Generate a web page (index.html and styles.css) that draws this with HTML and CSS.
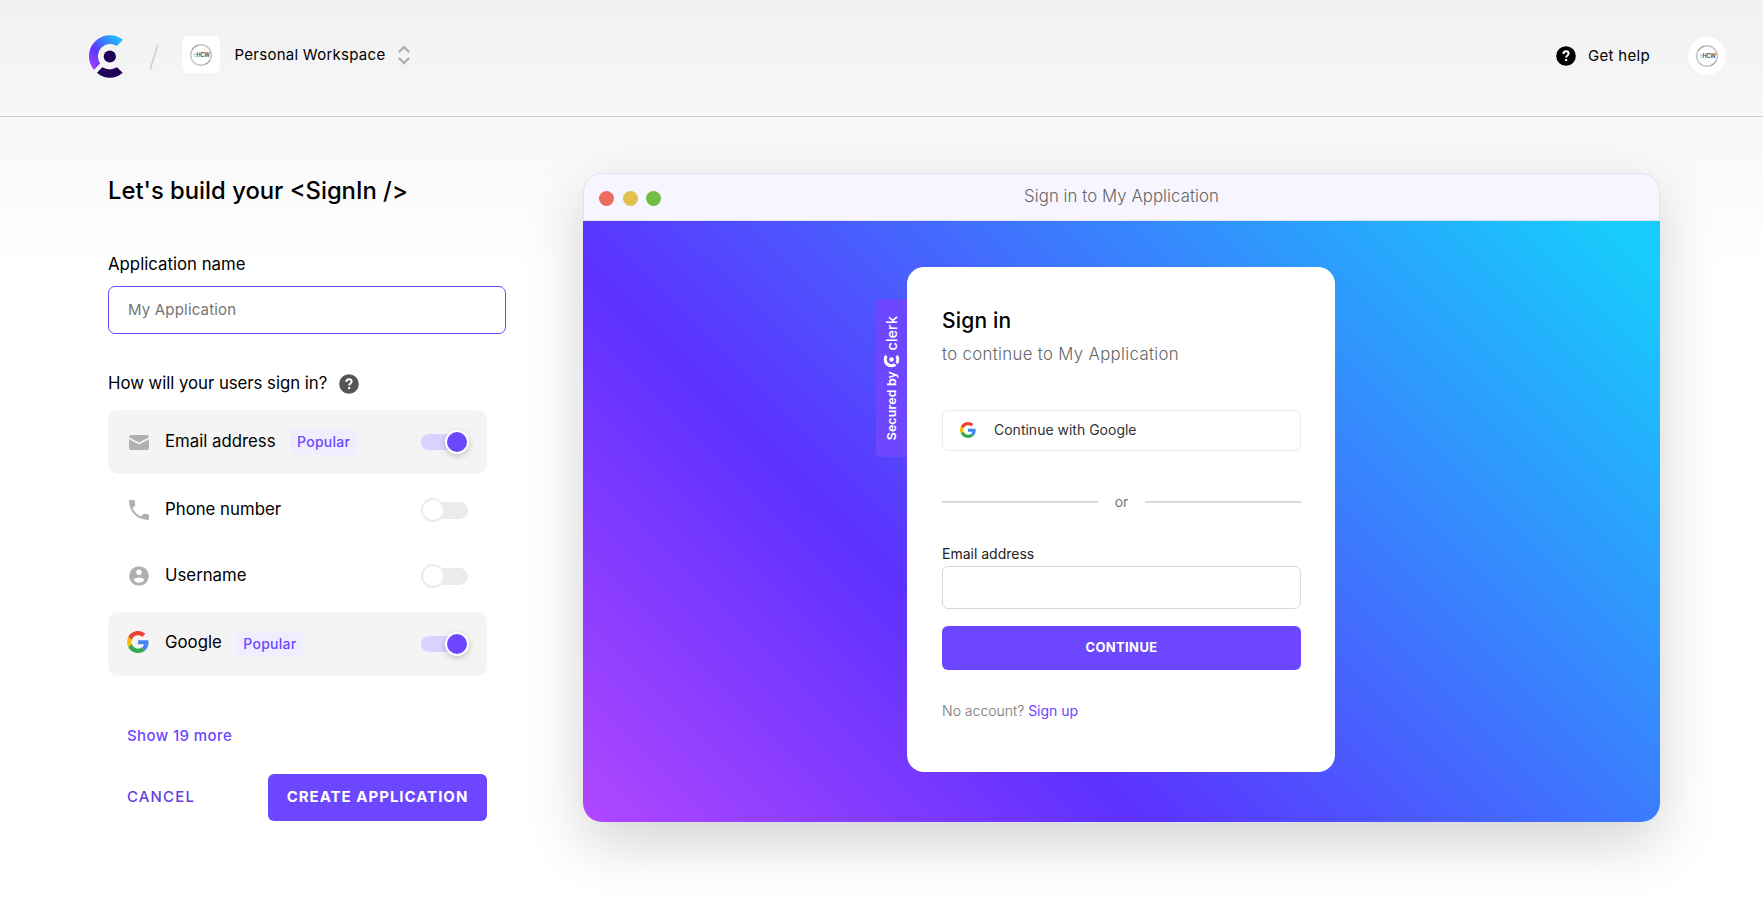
FILE: index.html
```html
<!DOCTYPE html>
<html lang="en">
<head>
<meta charset="utf-8">
<title>Create application</title>
<link rel="stylesheet" href="styles.css">
</head>
<body>
<svg class="defs" aria-hidden="true">
  <defs>
    <symbol id="google" viewBox="0 0 48 48">
      <path fill="#EA4335" d="M24 9.5c3.54 0 6.71 1.22 9.21 3.6l6.85-6.85C35.9 2.38 30.47 0 24 0 14.62 0 6.51 5.38 2.56 13.22l7.98 6.19C12.43 13.72 17.74 9.5 24 9.5z"/>
      <path fill="#4285F4" d="M46.98 24.55c0-1.57-.15-3.09-.38-4.55H24v9.02h12.94c-.58 2.96-2.26 5.48-4.78 7.18l7.73 6c4.51-4.18 7.09-10.36 7.09-17.65z"/>
      <path fill="#FBBC05" d="M10.53 28.59A14.5 14.5 0 0 1 9.77 24c0-1.6.27-3.14.76-4.59l-7.98-6.19A23.9 23.9 0 0 0 0 24c0 3.88.92 7.54 2.56 10.78l7.97-6.19z"/>
      <path fill="#34A853" d="M24 48c6.48 0 11.93-2.13 15.89-5.81l-7.73-6c-2.15 1.45-4.92 2.3-8.16 2.3-6.26 0-11.57-4.22-13.47-9.91l-7.98 6.19C6.51 42.62 14.62 48 24 48z"/>
    </symbol>
    <symbol id="help" viewBox="0 0 20 20">
      <circle cx="10" cy="10" r="9.8" fill="currentColor"/>
      <path d="M7.4 7.9C7.4 6.2 8.5 5.3 10 5.3s2.6.9 2.6 2.3c0 1.9-2.5 1.9-2.5 4" fill="none" stroke="#fff" stroke-width="2"/>
      <rect x="9.1" y="13" width="2.1" height="2.1" fill="#fff"/>
    </symbol>
    <symbol id="seal" viewBox="0 0 24 24">
      <circle cx="12" cy="12" r="10.3" fill="none" stroke="#c4c4c4" stroke-width="1.4"/>
      <path d="M3 7a10.3 10.3 0 0 1 6-4.8M21 17a10.3 10.3 0 0 1-5 4.4" fill="none" stroke="#999" stroke-width="1"/>
      <text x="4.6" y="14" class="seal-mark" fill="#9fd4f2">e</text>
      <text x="7.6" y="14" class="seal-mark" fill="#444">HCW</text>
    </symbol>
  </defs>
</svg>

<header class="topbar">
  <svg class="logo" viewBox="0 0 34 43">
    <defs>
      <linearGradient id="arc" x1="30" y1="4" x2="3" y2="33" gradientUnits="userSpaceOnUse">
        <stop offset="0" stop-color="#1fbfff"/><stop offset=".6" stop-color="#5b3aff"/><stop offset="1" stop-color="#a040ff"/>
      </linearGradient>
    </defs>
    <path d="M33.9 4.7A21 21 0 0 0 5 34.9L11.150 28.4A12.3 12.3 0 0 1 27.800 10.900Z" fill="url(#arc)"/>
    <circle cx="20.800" cy="21.500" r="6.100" fill="#1f0256"/>
    <path d="M8 37.700L13.300 32.300A14.500 14.500 0 0 0 28 32.300L33.700 37.700A19 19 0 0 1 8 37.700Z" fill="#1f0256"/>
  </svg>
  <svg class="slash" viewBox="0 0 10 26"><path d="M8.8.5L1.2 25.5" stroke="#cfcfcf" stroke-width="1.6"/></svg>
  <div class="workspace-tile"><svg class="seal"><use href="#seal"/></svg></div>
  <span class="workspace-name">Personal Workspace</span>
  <svg class="chevrons" viewBox="0 0 12 20"><path d="M1.500 6.500L6 2l4.500 4.500M1.500 13.500L6 18l4.500-4.500" fill="none" stroke="#b0b0b0" stroke-width="2.300" stroke-linecap="round"/></svg>
  <div class="top-right">
    <svg class="help-icon"><use href="#help"/></svg>
    <span class="get-help">Get help</span>
    <div class="avatar"><svg class="seal"><use href="#seal"/></svg></div>
  </div>
</header>

<main class="page">
  <section class="builder">
    <h1 class="title">Let's build your &lt;SignIn /&gt;</h1>
    <label class="field-label" for="app">Application name</label>
    <input class="app-input" id="app" placeholder="My Application">
    <div class="question"><span>How will your users sign in?</span><svg class="help-icon muted"><use href="#help"/></svg></div>
    <ul class="options">
      <li class="option selected">
        <span class="icon"><svg class="mail" viewBox="0 0 20 15"><path d="M2.500 0h15Q20 0 20 2.200L10 7.500 0 2.200Q0 0 2.500 0zM0 4.300L10 9.600 20 4.300V12.500Q20 15 17.500 15h-15Q0 15 0 12.500z" fill="#b0b0b0"/></svg></span>
        <span class="name">Email address</span><span class="badge">Popular</span>
        <span class="toggle on"><span class="knob"></span></span>
      </li>
      <li class="option">
        <span class="icon"><svg class="glyph" viewBox="0 0 20 20"><path d="M1 0H4.800Q5.700 0 5.800 1L6.200 4.800Q6.300 5.500 5.800 6L3.500 8.200Q6.300 13.600 11.800 16.500L14 14.200Q14.500 13.700 15.200 13.800L19 14.200Q20 14.300 20 15.200V19Q20 20 19 20A19 19 0 0 1 0 1Q0 0 1 0z" fill="#b0b0b0"/></svg></span>
        <span class="name">Phone number</span>
        <span class="toggle"><span class="knob"></span></span>
      </li>
      <li class="option">
        <span class="icon"><svg class="glyph" viewBox="0 0 20 20"><circle cx="10" cy="10" r="9.800" fill="#b0b0b0"/><circle cx="10" cy="6.200" r="2.700" fill="#fff"/><path d="M4.600 13.800c1.600-3.200 9.200-3.200 10.800 0-2 4-8.800 4-10.800 0z" fill="#fff"/></svg></span>
        <span class="name">Username</span>
        <span class="toggle"><span class="knob"></span></span>
      </li>
      <li class="option selected google">
        <span class="icon"><svg class="glyph"><use href="#google"/></svg></span>
        <span class="name">Google</span><span class="badge">Popular</span>
        <span class="toggle on"><span class="knob"></span></span>
      </li>
    </ul>
    <a class="show-more">Show 19 more</a>
    <div class="actions"><button class="cancel">CANCEL</button><button class="create">CREATE APPLICATION</button></div>
  </section>

  <section class="window">
    <div class="window-bar">
      <div class="dots"><i class="dot red"></i><i class="dot yellow"></i><i class="dot green"></i></div>
      <span class="window-title">Sign in to My Application</span>
    </div>
    <div class="stage">
      <div class="card">
        <div class="secured">
          <span class="secured-text">Secured by</span>
          <svg class="secured-logo" viewBox="0 0 34 43"><g fill="#fff"><path d="M33.900 4.700A21 21 0 0 0 5 34.900L11.150 28.400A12.300 12.300 0 0 1 27.800 10.900Z"/><circle cx="20.800" cy="21.500" r="6.100"/><path d="M8 37.700L13.300 32.300A14.500 14.500 0 0 0 28 32.300L33.700 37.700A19 19 0 0 1 8 37.700Z"/></g></svg>
          <span class="secured-brand">clerk</span>
        </div>
        <h2 class="card-title">Sign in</h2>
        <p class="card-sub">to continue to My Application</p>
        <button class="google-btn"><svg class="google-icon"><use href="#google"/></svg><span>Continue with Google</span></button>
        <div class="divider"><span>or</span></div>
        <label class="card-label" for="email">Email address</label>
        <input class="card-input" id="email">
        <button class="continue">CONTINUE</button>
        <p class="signup">No account? <a>Sign up</a></p>
      </div>
    </div>
  </section>
</main>
</body>
</html>
```
FILE: styles.css
```css
* { box-sizing: border-box; margin: 0; padding: 0; }
body {
  min-height: 900px;
  overflow: hidden;
  font-family: Inter, "Liberation Sans", sans-serif;
  color: #000;
  background: linear-gradient(180deg, #f1f1f1 0, #fff 270px) #fff;
}
button, input { font: inherit; border: 0; background: none; }
.defs { position: absolute; width: 0; height: 0; }

/* Top bar */
.topbar {
  display: flex;
  align-items: flex-start;
  height: 117px;
  padding: 35px 37px 0 89px;
  border-bottom: 1px solid #d0d0d0;
}
.logo { width: 34px; height: 43px; }
.slash { width: 10px; height: 26px; margin: 9px 0 0 26px; }
.workspace-tile {
  display: grid;
  place-items: center;
  width: 38px;
  height: 37px;
  margin: 1px 0 0 23px;
  border-radius: 6px;
  background: #fff;
}
.seal { width: 24px; height: 24px; }
.seal-mark { font: 600 5.5px Inter, sans-serif; letter-spacing: -.3px; }
.workspace-name { margin: 8px 0 0 14.5px; font-size: 15px; line-height: 24px; letter-spacing: .27px; width: 150px; white-space: nowrap; }
.chevrons { width: 12px; height: 20px; margin: 10px 0 0 13.5px; }
.top-right { display: flex; align-items: center; height: 38px; margin: 2px 0 0 auto; }
.help-icon { width: 20px; height: 20px; }
.get-help { width: 62px; margin: 0 38px 0 12px; font-size: 15px; line-height: 24px; letter-spacing: .3px; white-space: nowrap; }
.avatar { display: grid; place-items: center; width: 38px; height: 38px; border-radius: 50%; background: #fff; }

/* Builder form */
.page { display: flex; align-items: flex-start; gap: 77px; padding: 56px 0 0 108px; }
.builder { width: 398px; padding-top: 2px; }
.title { font-size: 23.8px; line-height: 32px; font-weight: 500; }
.field-label { display: block; margin-top: 45px; font-size: 16.8px; line-height: 24px; }
.app-input {
  display: block;
  width: 398px;
  height: 48px;
  margin-top: 10px;
  padding: 0 19px 1px;
  border: 1px solid #6c47ff;
  border-radius: 7px;
  background: #fff;
  font-size: 15px;
  letter-spacing: .18px;
}
.app-input::placeholder { color: #757575; }
.question { display: flex; align-items: center; gap: 12px; height: 24px; margin-top: 37px; font-size: 16.8px; line-height: 24px; letter-spacing: -.04px; }
.question .help-icon { margin-top: 2px; }
.muted { color: #555; }
.options { width: 379px; height: 266px; margin-top: 15px; list-style: none; }
.option { display: flex; align-items: center; height: 64px; padding: 0 19px 0 21px; border-radius: 10px; }
.option:nth-child(even) { margin-top: 4px; }
.option:nth-child(3) { margin-top: 2px; }
.selected { background: #f4f4f4; }
.icon { display: grid; place-items: center; width: 20px; margin-right: 16px; }
.mail { width: 20px; height: 15px; }
.glyph { width: 20px; height: 20px; }
.google .glyph { width: 22px; height: 22px; margin: 0 0 4px -2px; justify-self: start; }
.name { padding-bottom: 2px; font-size: 16.8px; line-height: 24px; }
.google .name { padding-bottom: 4px; }
.badge { height: 26px; margin-left: 14.5px; padding: 0 7px; border-radius: 5px; background: #f0edff; color: #6c47ff; font-size: 14px; line-height: 26px; font-weight: 500; letter-spacing: .25px; }
.toggle { display: flex; align-items: center; width: 47px; height: 17px; margin-left: auto; border-radius: 9px; background: #ebebeb; }
.knob { flex: none; width: 24px; height: 24px; border: 2px solid #ebebeb; border-radius: 50%; background: #fff; }
.on { height: 16px; background: #dad1ff; justify-content: flex-end; }
.on .knob { margin-right: -1px; border-color: #fff; background: #6c47ff; box-shadow: 0 2px 6px rgba(0, 0, 0, .2); }
.show-more { display: block; margin: 48px 0 0 19px; color: #6c47ff; font-size: 15px; line-height: 24px; font-weight: 500; letter-spacing: .4px; }
.actions { display: flex; justify-content: space-between; width: 379px; margin-top: 26px; padding-left: 19px; }
.cancel { color: #5f3fe0; padding-bottom: 2px; font-size: 15px; font-weight: 500; letter-spacing: 1.15px; }
.create { width: 219px; height: 47px; padding-bottom: 2px; border-radius: 6px; background: #6c47ff; color: #fff; font-size: 15px; font-weight: 700; letter-spacing: 1px; white-space: nowrap; }

/* Preview window */
.window { width: 1077px; height: 648.5px; border-radius: 19px; box-shadow: 0 20px 60px rgba(0, 0, 0, .18); }
.window-bar { display: grid; grid-template-columns: 1fr auto 1fr; align-items: center; height: 48px; padding: 0 15px; border: 1px solid #e3e1ec; border-radius: 19px 19px 0 0; background: #f7f5ff; }
.dots { display: flex; gap: 8.5px; padding-top: 2px; }
.dot { width: 15px; height: 15px; border-radius: 50%; }
.red { background: #ed6a5e; }
.yellow { background: #e2c04f; }
.green { background: #71be47; }
.window-title { color: #666; font-size: 16.8px; line-height: 24px; padding-bottom: 2px; font-weight: 300; letter-spacing: .06px; }
.stage { display: flex; justify-content: center; height: 600.5px; padding: 46px 1px 0 0; border-radius: 0 0 19px 19px; background: linear-gradient(45deg, #b047ff 0%, #5d31ff 33%, #17ccfc 97%); }
.card { position: relative; width: 428px; height: 505px; padding: 40px 34px 0 35px; border-radius: 17px; background: #fff; }
.secured { position: absolute; right: 100%; top: 32px; display: flex; flex-direction: row-reverse; align-items: center; justify-content: space-between; width: 31px; height: 158px; padding: 17px 0 17px; border-radius: 6px 0 0 6px; background: #6c47ff; color: #fff; writing-mode: vertical-rl; }
.secured-text, .secured-brand { transform: rotate(180deg); white-space: nowrap; line-height: 16px; }
.secured-text { font-size: 12.3px; font-weight: 600; letter-spacing: .2px; }
.secured-brand { font-size: 14.5px; font-weight: 500; }
.secured-logo { width: 13px; height: 16px; transform: rotate(-90deg); }
.card-title { font-size: 21px; line-height: 28px; font-weight: 500; letter-spacing: .2px; }
.card-sub { margin-top: 7px; color: #666; font-size: 16.8px; line-height: 24px; font-weight: 300; letter-spacing: .33px; }
.google-btn { display: flex; align-items: center; gap: 19px; width: 359px; height: 41px; margin-top: 44px; padding: 0 17px 2px; border: 1px solid #ebebeb; border-radius: 6px; color: #333; font-size: 14px; }
.google-icon { width: 16px; height: 16px; margin-right: -1px; }
.divider { display: flex; align-items: center; gap: 17px; height: 20px; margin-top: 41px; color: #757575; font-size: 14px; }
.divider span { padding-bottom: 1px; }
.divider::before, .divider::after { content: ""; flex: 1; height: 2px; background: #d9d9d9; }
.card-label { display: block; margin-top: 32px; color: #222; font-size: 14px; line-height: 20px; }
.card-input { display: block; width: 359px; height: 43px; margin-top: 2px; border: 1px solid #d9d9d9; border-radius: 6px; }
.continue { display: block; width: 359px; height: 43.5px; margin-top: 17px; padding-bottom: 2px; border-radius: 6px; background: #6c47ff; color: #fff; font-size: 13px; font-weight: 700; letter-spacing: .35px; }
.signup { margin-top: 31.5px; color: #737373; font-size: 14px; line-height: 20px; font-weight: 300; }
.signup a { color: #6c47ff; font-weight: 400; }
```
